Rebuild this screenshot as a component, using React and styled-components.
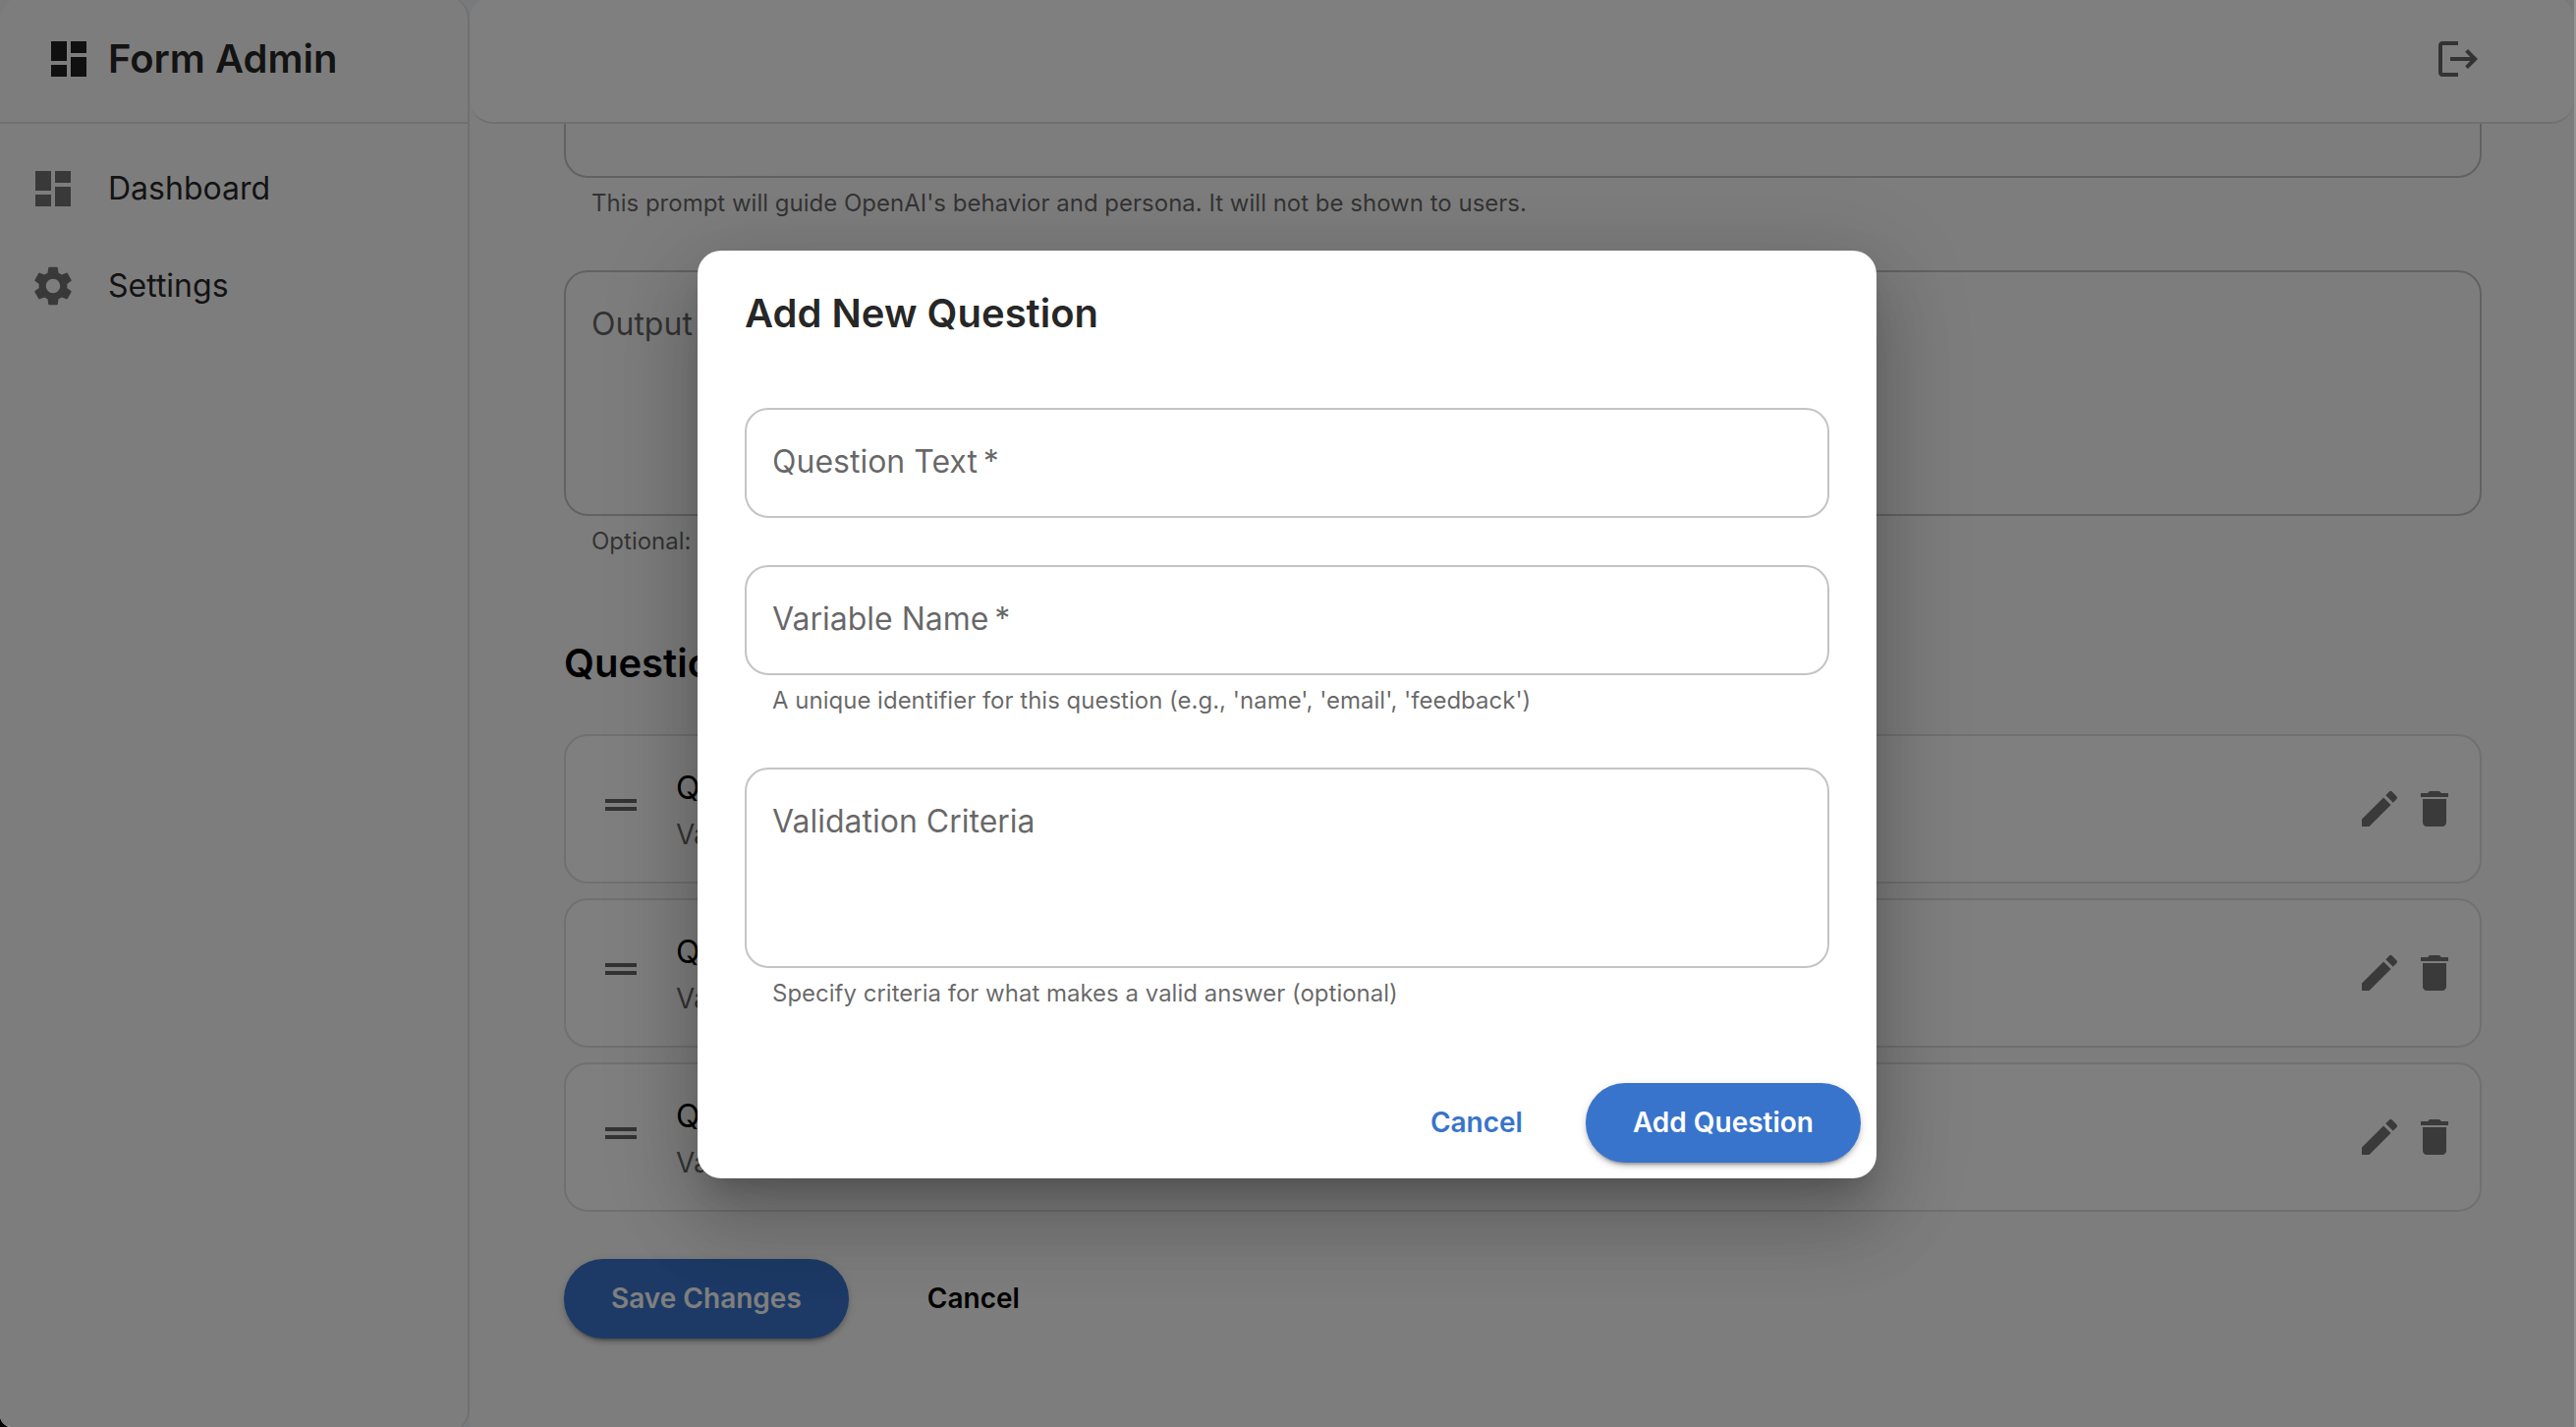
import React from "react";
import styled, { createGlobalStyle, css } from "styled-components";
import {
  MdDashboard,
  MdDelete,
  MdDragHandle,
  MdEdit,
  MdLogout,
  MdSettings,
} from "react-icons/md";

const color = {
  text: "rgba(0, 0, 0, 0.87)",
  muted: "rgba(0, 0, 0, 0.6)",
  icon: "rgba(0, 0, 0, 0.54)",
  divider: "#e0e0e0",
  outline: "#c4c4c4",
  primary: "#3874cb",
  page: "#fafafa",
};

const GlobalStyle = createGlobalStyle`
  * { box-sizing: border-box; }
  html { background: #000; }
  body {
    margin: 0;
    background: #000;
    color: #000;
    font-family: Inter, Roboto, sans-serif;
    font-size: 32px;
    line-height: 48px;
  }
  button, input, textarea { font-family: inherit; }
  h1, h2, p, ul { margin: 0; padding: 0; }
  ul { list-style: none; }
`;

const Window = styled.div`
  height: 100vh;
  overflow: hidden;
  padding-right: 2px;
  background: #949494;
  border-bottom-left-radius: 12px;
`;

const Frame = styled.div`
  position: relative;
  display: flex;
  height: calc(100vh + 10px);
  margin-top: -4px;
  background: #f0f4f8;
`;

const Sidebar = styled.nav`
  flex: 0 0 478px;
  border-right: 2px solid ${color.divider};
  border-radius: 24px;
  background: ${color.page};
  overflow: hidden;
`;

const Brand = styled.div`
  display: flex;
  align-items: center;
  gap: 16px;
  height: 130px;
  padding: 0 46px;
  border-bottom: 2px solid ${color.divider};
  color: ${color.text};

  svg { width: 48px; height: 48px; }
`;

const BrandName = styled.h1`
  font-size: 40px;
  line-height: 64px;
  font-weight: 600;
`;

const Menu = styled.ul`
  padding: 16px 0;
`;

const MenuLink = styled.a`
  display: flex;
  align-items: center;
  gap: 32px;
  height: 99px;
  padding: 0 30px;
  color: ${color.text};
  text-decoration: none;

  svg { width: 48px; height: 48px; color: ${color.icon}; }
`;

const Main = styled.div`
  flex: 1;
  min-width: 0;
  display: flex;
  flex-direction: column;
  background: ${color.page};
  border-top-left-radius: 24px;
  border-top-right-radius: 24px;
`;

const Header = styled.header`
  position: relative;
  z-index: 1;
  flex: none;
  display: flex;
  align-items: center;
  justify-content: flex-end;
  height: 130px;
  padding: 0 94px;
  border-bottom: 2px solid ${color.divider};
  border-radius: 24px;
  background: #fff;
`;

const IconButton = styled.button`
  display: flex;
  padding: 0;
  border: 0;
  background: none;
  color: ${(p) => (p.$strong ? color.muted : color.icon)};
  cursor: pointer;

  svg { width: 48px; height: 48px; }
`;

const ScrollArea = styled.main`
  flex: 1;
  min-height: 0;
  overflow: hidden;
  padding: 0 94px 0 96px;
`;

/* The form sits scrolled part of the way down under the header. */
const Form = styled.form`
  margin-top: -195px;
`;

const Stack = styled.div`
  display: flex;
  flex-direction: column;
  gap: 48px;
`;

const FieldRoot = styled.div`
  display: flex;
  flex-direction: column;
`;

const FieldBox = styled.div`
  position: relative;
  display: flex;
`;

const FieldLabel = styled.label`
  position: absolute;
  top: 32px;
  left: 28px;
  font-size: 32px;
  line-height: 46px;
  color: ${color.muted};
  pointer-events: none;
`;

const control = css`
  flex: 1;
  min-width: 0;
  height: ${(p) => p.$height}px;
  padding: 32px 28px;
  border: 2px solid ${color.outline};
  border-radius: 24px;
  background: transparent;
  font-size: 32px;
  line-height: 46px;
  color: ${color.text};
  outline: none;
`;

const Input = styled.input`
  ${control}
`;

const TextArea = styled.textarea`
  ${control}
  resize: none;
`;

const Helper = styled.p`
  margin-top: 6px;
  padding: 0 28px;
  font-size: 24px;
  line-height: 40px;
  color: ${color.muted};
`;

const SectionTitle = styled.h2`
  padding: 72px 0 40px;
  font-size: 40px;
  line-height: 64px;
  font-weight: 600;
`;

const QuestionList = styled.ul`
  display: flex;
  flex-direction: column;
  gap: 15px;
`;

const QuestionCard = styled.li`
  display: flex;
  align-items: center;
  min-height: 152px;
  padding: 0 22px 0 32px;
  border: 2px solid ${color.divider};
  border-radius: 24px;
  background: #fff;
`;

const Handle = styled.span`
  display: flex;
  padding-bottom: 8px;
  margin-right: 32px;
  color: ${color.muted};

  svg { width: 48px; height: 48px; }
`;

const QuestionText = styled.div`
  flex: 1;
`;

const Primary = styled.p`
  line-height: 52px;
`;

const Secondary = styled.p`
  font-size: 28px;
  line-height: 42px;
  color: ${color.muted};
`;

const CardActions = styled.div`
  display: flex;
  gap: 8px;
`;

const Button = styled.button`
  padding: 16px 48px;
  border: 0;
  border-radius: 40px;
  background: none;
  color: ${(p) => (p.$tone === "link" ? color.primary : "#000")};
  font-size: 28px;
  line-height: 49px;
  font-weight: 600;
  cursor: pointer;

  ${(p) =>
    p.$tone === "filled" &&
    css`
      background: ${color.primary};
      color: #fff;
      box-shadow: 0 6px 2px -4px rgba(0, 0, 0, 0.2),
        0 4px 4px rgba(0, 0, 0, 0.14), 0 2px 10px rgba(0, 0, 0, 0.12);
    `}
`;

const FormActions = styled.div`
  display: flex;
  gap: 32px;
  padding-top: 48px;
`;

const Backdrop = styled.div`
  position: absolute;
  inset: 0;
  z-index: 2;
  display: flex;
  align-items: center;
  justify-content: center;
  background: rgba(0, 0, 0, 0.5);
`;

const Dialog = styled.form`
  width: 1200px;
  max-width: calc(100% - 128px);
  border-radius: 24px;
  background: #fff;
  box-shadow: 0 22px 30px -14px rgba(0, 0, 0, 0.2),
    0 48px 76px 6px rgba(0, 0, 0, 0.14), 0 18px 92px 16px rgba(0, 0, 0, 0.12);
`;

const DialogTitle = styled.h2`
  padding: 32px 48px;
  font-size: 40px;
  line-height: 64px;
  font-weight: 600;
  color: ${color.text};
`;

const DialogBody = styled(Stack)`
  padding: 32px 48px 55px;
`;

const DialogActions = styled.div`
  display: flex;
  justify-content: flex-end;
  gap: 16px;
  padding: 16px;
`;

function Field({ id, label, helper, required, multiline, height = 112 }) {
  const Control = multiline ? TextArea : Input;
  const helperId = helper ? `${id}-helper` : undefined;
  return (
    <FieldRoot>
      <FieldBox>
        <Control
          id={id}
          $height={height}
          required={required}
          aria-label={label ? undefined : "System prompt"}
          aria-describedby={helperId}
        />
        {label && (
          <FieldLabel htmlFor={id}>
            {label}
            {required && "\u2009*"}
          </FieldLabel>
        )}
      </FieldBox>
      {helper && <Helper id={helperId}>{helper}</Helper>}
    </FieldRoot>
  );
}

function QuestionRow() {
  return (
    <QuestionCard>
      <Handle>
        <MdDragHandle />
      </Handle>
      <QuestionText>
        <Primary>Question</Primary>
        <Secondary>Variable</Secondary>
      </QuestionText>
      <CardActions>
        <IconButton type="button" aria-label="Edit">
          <MdEdit />
        </IconButton>
        <IconButton type="button" aria-label="Delete">
          <MdDelete />
        </IconButton>
      </CardActions>
    </QuestionCard>
  );
}

export default function App() {
  return (
    <>
      <GlobalStyle />
      <Window>
        <Frame>
          <Sidebar>
            <Brand>
              <MdDashboard />
              <BrandName>Form Admin</BrandName>
            </Brand>
            <Menu>
              <li>
                <MenuLink href="#dashboard">
                  <MdDashboard />
                  Dashboard
                </MenuLink>
              </li>
              <li>
                <MenuLink href="#settings">
                  <MdSettings />
                  Settings
                </MenuLink>
              </li>
            </Menu>
          </Sidebar>
          <Main>
            <Header>
              <IconButton type="button" aria-label="Log out" $strong>
                <MdLogout />
              </IconButton>
            </Header>
            <ScrollArea>
              <Form>
                <Stack>
                  <Field
                    id="system-prompt"
                    multiline
                    height={250}
                    helper="This prompt will guide OpenAI's behavior and persona. It will not be shown to users."
                  />
                  <Field
                    id="output"
                    label="Output"
                    multiline
                    height={250}
                    helper="Optional:"
                  />
                </Stack>
                <SectionTitle>Questions</SectionTitle>
                <QuestionList>
                  <QuestionRow />
                  <QuestionRow />
                  <QuestionRow />
                </QuestionList>
                <FormActions>
                  <Button type="button" $tone="filled">
                    Save Changes
                  </Button>
                  <Button type="button">Cancel</Button>
                </FormActions>
              </Form>
            </ScrollArea>
          </Main>
          <Backdrop>
            <Dialog role="dialog" aria-labelledby="dialog-title">
              <DialogTitle id="dialog-title">Add New Question</DialogTitle>
              <DialogBody>
                <Field id="question-text" label="Question Text" required />
                <Field
                  id="variable-name"
                  label="Variable Name"
                  required
                  helper="A unique identifier for this question (e.g., 'name', 'email', 'feedback')"
                />
                <Field
                  id="validation"
                  label="Validation Criteria"
                  multiline
                  height={204}
                  helper="Specify criteria for what makes a valid answer (optional)"
                />
              </DialogBody>
              <DialogActions>
                <Button type="button" $tone="link">
                  Cancel
                </Button>
                <Button type="button" $tone="filled">
                  Add Question
                </Button>
              </DialogActions>
            </Dialog>
          </Backdrop>
        </Frame>
      </Window>
    </>
  );
}
